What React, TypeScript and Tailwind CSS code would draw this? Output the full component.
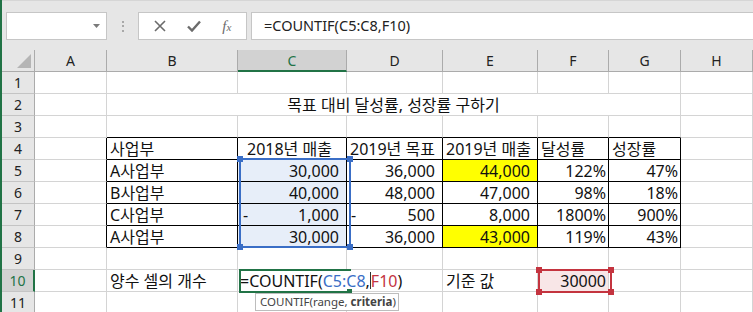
import React from "react";

// Excel-like sheet: COUNTIF being typed in C10

type Cell = {
  t?: React.ReactNode;
  r?: "g" | "k" | "n";
  b?: "g" | "k";
  cls?: string;
  span?: boolean;
};

const SEL = "bg-[#e7eef9]";
const NUM = "justify-end pr-[7px]";
const PCT = "justify-end pr-[2px]";
const TXT = "pl-[3px]";

const blanks = (n: number): Cell[] => Array.from({ length: n }, () => ({}));

const tbl = (t: React.ReactNode, cls = ""): Cell => ({ t, r: "k", b: "k", cls });

const dash = (n: string): React.ReactNode => (
  <>
    <span>-</span>
    <span>{n}</span>
  </>
);

const rows: Cell[][] = [
  blanks(8),
  [{}, { span: true, t: "목표 대비 달성률, 성장률 구하기", cls: "justify-center" }, {}],
  [{}, ...Array.from({ length: 6 }, (): Cell => ({ b: "k" })), {}],
  [
    { r: "k" },
    tbl("사업부", TXT),
    tbl("2018년 매출", "pl-[9px]"),
    tbl("2019년 목표", TXT),
    tbl("2019년 매출", TXT),
    tbl("달성률", TXT),
    tbl("성장률", TXT),
    {},
  ],
  [
    { r: "k" },
    tbl("A사업부", TXT),
    tbl("30,000", `${NUM} ${SEL}`),
    tbl("36,000", NUM),
    tbl("44,000", `${NUM} bg-[#ffff00]`),
    tbl("122%", PCT),
    tbl("47%", PCT),
    {},
  ],
  [
    { r: "k" },
    tbl("B사업부", TXT),
    tbl("40,000", `${NUM} ${SEL}`),
    tbl("48,000", NUM),
    tbl("47,000", NUM),
    tbl("98%", PCT),
    tbl("18%", PCT),
    {},
  ],
  [
    { r: "k" },
    tbl("C사업부", TXT),
    tbl(dash("1,000"), `justify-between pl-[5px] pr-[7px] ${SEL}`),
    tbl(dash("500"), "justify-between pl-[4px] pr-[7px]"),
    tbl("8,000", NUM),
    tbl("1800%", PCT),
    tbl("900%", PCT),
    {},
  ],
  [
    { r: "k" },
    tbl("A사업부", TXT),
    tbl("30,000", `${NUM} ${SEL}`),
    tbl("36,000", NUM),
    tbl("43,000", `${NUM} bg-[#ffff00]`),
    tbl("119%", PCT),
    tbl("43%", PCT),
    {},
  ],
  blanks(8),
  [
    {},
    { t: "양수 셀의 개수", cls: TXT },
    {
      r: "n",
      cls: "pl-[2px] overflow-visible",
      t: (
        <span className="flex items-center">
          =COUNTIF(<span className="text-[#3a6ec6]">C5:C8</span>,
          <span className="inline-block w-px h-[17px] bg-[#333]" />
          <span className="text-[#c4343f]">F10</span>)
        </span>
      ),
    },
    {},
    { t: "기준 값", cls: TXT },
    { t: "30000", cls: `${PCT} bg-[#f8e6e7]` },
    {},
    {},
  ],
  blanks(8),
];

function GridCell({ c }: { c: Cell }) {
  const rc = c.r === "k" ? "border-r-black" : c.r === "n" ? "border-r-transparent" : "border-r-[#d4d4d4]";
  const bc = c.b === "k" ? "border-b-black" : "border-b-[#d4d4d4]";
  return (
    <div
      className={`h-[22px] border-r border-b ${rc} ${bc} flex items-center whitespace-nowrap leading-[20px] ${
        c.span ? "col-span-6" : ""
      } ${c.cls ?? ""}`}
    >
      {c.t}
    </div>
  );
}

function Toolbar() {
  return (
    <div className="h-[50px] bg-[#e6e6e6] border-t border-t-[#d6d6d6] flex items-start pt-[11px]">
      <div className="ml-[4px] w-[101px] h-[28px] bg-white border border-[#c6c6c6] flex items-center justify-end pr-[6px]">
        <svg width="7" height="4" viewBox="0 0 7 4">
          <path d="M0 0 L7 0 L3.5 4 Z" fill="#7a7a7a" />
        </svg>
      </div>
      <div className="w-[31px] h-[28px] flex flex-col items-center justify-center gap-[2.5px]">
        <span className="w-[2px] h-[2px] bg-[#a8a8a8]" />
        <span className="w-[2px] h-[2px] bg-[#a8a8a8]" />
        <span className="w-[2px] h-[2px] bg-[#a8a8a8]" />
      </div>
      <div className="w-[109px] h-[28px] bg-white border border-[#c6c6c6] flex items-center justify-around px-[4px]">
        <svg width="12" height="12" viewBox="0 0 12 12">
          <path d="M1 1 L11 11 M11 1 L1 11" stroke="#6b6b6b" strokeWidth="1.6" fill="none" />
        </svg>
        <svg width="14" height="12" viewBox="0 0 14 12">
          <path d="M1 6.5 L5 10.5 L13 1.5" stroke="#6b6b6b" strokeWidth="2.4" fill="none" />
        </svg>
        <span className="font-['Liberation_Serif',serif] italic text-[#6b6b6b] text-[15px] leading-none">
          f<span className="text-[11px]">x</span>
        </span>
      </div>
      <div className="ml-[4px] flex-1 h-[28px] bg-white border border-[#c6c6c6] border-r-0 flex items-center pl-[12px] text-[14.5px] text-[#222]">
        =COUNTIF(C5:C8,F10)
      </div>
    </div>
  );
}

const COLS = ["A", "B", "C", "D", "E", "F", "G", "H"];

export default function App() {
  return (
    <div className="relative w-[753px] h-[312px] overflow-hidden bg-white border-l-2 border-l-[#217346] font-['Noto_Sans','Noto_Sans_CJK_KR',sans-serif] text-[#111]">
      <Toolbar />
      <div className="grid grid-cols-[33px_72px_131px_109px_96px_95px_71px_72px_72px]">
        {/* column headers */}
        <div className="h-[22px] bg-[#e6e6e6] border-r border-b border-[#ababab] flex items-end justify-end pr-[3px] pb-[3px]">
          <svg width="14" height="14" viewBox="0 0 14 14">
            <path d="M14 0 L14 14 L0 14 Z" fill="#b5b5b5" />
          </svg>
        </div>
        {COLS.map((c) =>
          c === "C" ? (
            <div
              key={c}
              className="h-[22px] bg-[#d2d2d2] border-r border-r-[#ababab] border-b-2 border-b-[#217346] flex items-center justify-center text-[14px] text-[#217346]"
            >
              {c}
            </div>
          ) : (
            <div
              key={c}
              className="h-[22px] bg-[#e6e6e6] border-r border-b border-[#ababab] flex items-center justify-center text-[14px] text-[#222]"
            >
              {c}
            </div>
          )
        )}
        {rows.map((cells, i) => (
          <React.Fragment key={i}>
            {i === 9 ? (
              <div className="h-[22px] bg-[#d2d2d2] border-r-2 border-r-[#217346] border-b border-b-[#c4c4c4] flex items-center justify-center text-[14px] text-[#217346]">
                {i + 1}
              </div>
            ) : (
              <div className="h-[22px] bg-[#e6e6e6] border-r border-r-[#ababab] border-b border-b-[#c4c4c4] flex items-center justify-center text-[14px] text-[#222]">
                {i + 1}
              </div>
            )}
            {cells.map((c, j) => (
              <GridCell key={j} c={c} />
            ))}
          </React.Fragment>
        ))}
      </div>

      {/* range reference C5:C8 */}
      <div className="absolute left-[237px] top-[158px] w-[112px] h-[90px] border-2 border-[#3a6ec6]">
        <span className="absolute -left-[4px] -top-[4px] w-[6px] h-[6px] bg-[#3a6ec6]" />
        <span className="absolute -right-[4px] -top-[4px] w-[6px] h-[6px] bg-[#3a6ec6]" />
        <span className="absolute -left-[4px] -bottom-[4px] w-[6px] h-[6px] bg-[#3a6ec6]" />
        <span className="absolute -right-[4px] -bottom-[4px] w-[6px] h-[6px] bg-[#3a6ec6]" />
      </div>

      {/* range reference F10 */}
      <div className="absolute left-[536px] top-[269px] w-[74px] h-[24px] border-2 border-[#c4343f]">
        <span className="absolute -left-[4px] -top-[4px] w-[6px] h-[6px] bg-[#c4343f]" />
        <span className="absolute -right-[4px] -top-[4px] w-[6px] h-[6px] bg-[#c4343f]" />
        <span className="absolute -left-[4px] -bottom-[4px] w-[6px] h-[6px] bg-[#c4343f]" />
        <span className="absolute -right-[4px] -bottom-[4px] w-[6px] h-[6px] bg-[#c4343f]" />
      </div>

      {/* active cell C10 in edit mode */}
      <div className="absolute left-[237px] top-[269px] w-[112px] h-[24px] border-2 border-r-0 border-[#217346]">
        <span className="absolute -right-[1px] -bottom-[3px] w-[5px] h-[5px] bg-[#217346]" />
      </div>

      {/* function tooltip */}
      <div className="absolute left-[253px] top-[293px] w-[144px] h-[18px] bg-white border border-[#bdbdbd] flex items-center pl-[4px] text-[11.5px] leading-none text-[#444] whitespace-nowrap">
        COUNTIF(range, <b className="ml-[3px]">criteria</b>)
      </div>
    </div>
  );
}
